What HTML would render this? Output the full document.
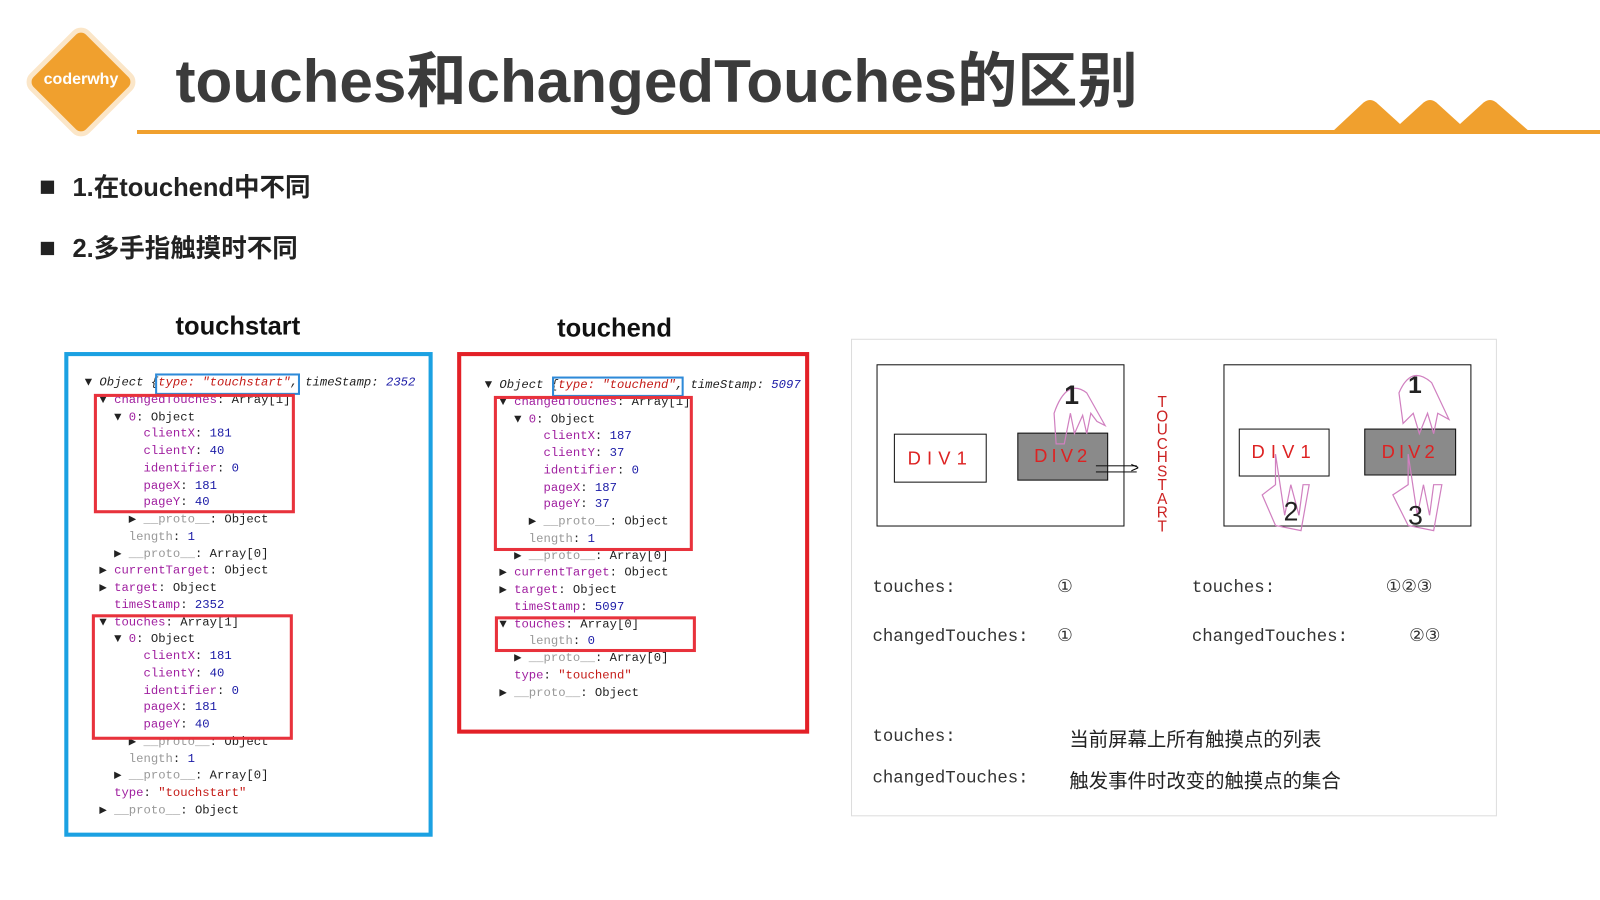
<!DOCTYPE html>
<html><head><meta charset="utf-8"><style>
body{margin:0;width:1600px;height:900px;background:#fff;position:relative;overflow:hidden;font-family:"Liberation Sans","Noto Sans CJK SC",sans-serif}
#w{position:absolute;left:0;top:0;width:1568px;height:882px;transform:scale(1.0204);transform-origin:0 0}
.a{position:absolute}
.t{font-size:59px;font-weight:bold;color:#3b3b3b;left:172px;top:32px;letter-spacing:0}
.b{font-size:25px;font-weight:bold;color:#222;left:40px}
.b i{display:inline-block;width:13px;height:13px;background:#222;margin-right:18px;vertical-align:2px}
.code{font-family:"Liberation Mono","DejaVu Sans Mono",monospace;font-size:12px;line-height:16.75px;white-space:pre;color:#222}
.k{color:#a020a0}.v{color:#1a1aa6}.g{color:#999}.s{color:#c41a16}.it{font-style:italic}
.rb{position:absolute;border:3px solid #e8323c}
.cn{font-family:"Liberation Mono","DejaVu Sans Mono",monospace;font-size:17px;color:#333}
.cz{font-size:19px;color:#222}
</style></head><body>
<div class="a" style="left:39px;top:40px;width:74px;height:74px;transform:rotate(45deg);background:#f0a02e;border:5px solid #fbe6c8;border-radius:12px"></div>
<div class="a" style="left:33px;top:71px;width:96px;text-align:center;color:#fff;font-weight:bold;font-size:16px">coderwhy</div>
<div class="a" style="left:137px;top:130px;width:1463px;height:4px;background:#f0a02e"></div>
<svg class="a" style="left:0;top:0" width="1600" height="140"><path d="M1332 132 L1362 104 Q1370 96 1378 104 L1400 124 L1422 104 Q1430 96 1438 104 L1460 124 L1482 104 Q1490 96 1498 104 L1530 132Z" fill="#f0a02e"/></svg>
<div id="w">
<div class="a t">touches和changedTouches的区别</div>
<div class="a b" style="top:164px"><i></i>1.在touchend中不同</div>
<div class="a b" style="top:224px"><i></i>2.多手指触摸时不同</div>
<div class="a" style="left:172px;top:306px;font-size:25px;font-weight:bold;color:#111">touchstart</div>
<div class="a" style="left:546px;top:308px;font-size:25px;font-weight:bold;color:#111">touchend</div>

<div class="a" style="left:63px;top:345px;width:353px;height:467px;border:4px solid #1ba1e2"></div>
<div class="a code" style="left:83px;top:367px">▼ <span class="it">Object {<span class="s">type: "touchstart"</span>, timeStamp: <span class="v">2352</span></span>
  ▼ <span class="k">changedTouches</span>: Array[1]
    ▼ <span class="k">0</span>: Object
        <span class="k">clientX</span>: <span class="v">181</span>
        <span class="k">clientY</span>: <span class="v">40</span>
        <span class="k">identifier</span>: <span class="v">0</span>
        <span class="k">pageX</span>: <span class="v">181</span>
        <span class="k">pageY</span>: <span class="v">40</span>
      ▶ <span class="g">__proto__</span>: Object
      <span class="g">length</span>: <span class="v">1</span>
    ▶ <span class="g">__proto__</span>: Array[0]
  ▶ <span class="k">currentTarget</span>: Object
  ▶ <span class="k">target</span>: Object
    <span class="k">timeStamp</span>: <span class="v">2352</span>
  ▼ <span class="k">touches</span>: Array[1]
    ▼ <span class="k">0</span>: Object
        <span class="k">clientX</span>: <span class="v">181</span>
        <span class="k">clientY</span>: <span class="v">40</span>
        <span class="k">identifier</span>: <span class="v">0</span>
        <span class="k">pageX</span>: <span class="v">181</span>
        <span class="k">pageY</span>: <span class="v">40</span>
      ▶ <span class="g">__proto__</span>: Object
      <span class="g">length</span>: <span class="v">1</span>
    ▶ <span class="g">__proto__</span>: Array[0]
    <span class="k">type</span>: <span class="s">"touchstart"</span>
  ▶ <span class="g">__proto__</span>: Object</div>
<div class="a" style="left:152px;top:366px;width:138px;height:17px;border:2px solid #2e8ad8"></div>
<div class="rb" style="left:92px;top:386px;width:191px;height:111px"></div>
<div class="rb" style="left:90px;top:602px;width:191px;height:117px"></div>

<div class="a" style="left:448px;top:345px;width:337px;height:366px;border:4px solid #e32027"></div>
<div class="a code" style="left:475px;top:369px">▼ <span class="it">Object {<span class="s">type: "touchend"</span>, timeStamp: <span class="v">5097</span></span>
  ▼ <span class="k">changedTouches</span>: Array[1]
    ▼ <span class="k">0</span>: Object
        <span class="k">clientX</span>: <span class="v">187</span>
        <span class="k">clientY</span>: <span class="v">37</span>
        <span class="k">identifier</span>: <span class="v">0</span>
        <span class="k">pageX</span>: <span class="v">187</span>
        <span class="k">pageY</span>: <span class="v">37</span>
      ▶ <span class="g">__proto__</span>: Object
      <span class="g">length</span>: <span class="v">1</span>
    ▶ <span class="g">__proto__</span>: Array[0]
  ▶ <span class="k">currentTarget</span>: Object
  ▶ <span class="k">target</span>: Object
    <span class="k">timeStamp</span>: <span class="v">5097</span>
  ▼ <span class="k">touches</span>: Array[0]
      <span class="g">length</span>: <span class="v">0</span>
    ▶ <span class="g">__proto__</span>: Array[0]
    <span class="k">type</span>: <span class="s">"touchend"</span>
  ▶ <span class="g">__proto__</span>: Object</div>
<div class="a" style="left:541px;top:369px;width:125px;height:16px;border:2px solid #2e8ad8"></div>
<div class="rb" style="left:484px;top:388px;width:189px;height:146px"></div>
<div class="rb" style="left:485px;top:604px;width:191px;height:29px"></div>

<div class="a" style="left:834px;top:332px;width:631px;height:466px;border:1px solid #ddd"></div>
<div class="a" style="left:859px;top:357px;width:241px;height:157px;border:1.5px solid #111"></div>
<div class="a" style="left:876px;top:425px;width:89px;height:46px;border:1.5px solid #111;color:#d22;font-size:18px;text-align:center;line-height:46px;letter-spacing:6px">DIV1</div>
<div class="a" style="left:997px;top:424px;width:87px;height:45px;border:1px solid #111;background:#8a8a8a;color:#d22;font-size:18px;text-align:center;line-height:45px;letter-spacing:4px">DIV2</div>
<div class="a" style="left:1074px;top:456px;width:40px;height:5px;border-top:1px solid #111;border-bottom:1px solid #111"></div>
<div class="a" style="left:1108px;top:450px;font-size:14px">&gt;</div>
<div class="a" style="left:1130px;top:388px;width:18px;color:#c22;font-size:15px;line-height:13.5px;text-align:center">T<br>O<br>U<br>C<br>H<br>S<br>T<br>A<br>R<br>T</div>
<div class="a" style="left:1199px;top:357px;width:241px;height:157px;border:1.5px solid #111"></div>
<div class="a" style="left:1214px;top:420px;width:87px;height:45px;border:1.5px solid #111;color:#d22;font-size:18px;text-align:center;line-height:45px;letter-spacing:6px">DIV1</div>
<div class="a" style="left:1337px;top:420px;width:88px;height:44px;border:1px solid #111;background:#8a8a8a;color:#d22;font-size:18px;text-align:center;line-height:44px;letter-spacing:4px">DIV2</div>
<svg class="a" style="left:1025px;top:365px" width="420" height="165" fill="none" stroke="#d080c0" stroke-width="1.2">
<path d="M10 70 L8 40 Q20 5 40 20 L58 52 L50 48 L44 40 L40 60 L36 42 L28 60 L24 40 L18 70Z"/>
<path d="M350 50 L346 20 Q358 -8 378 10 L395 46 L384 40 L380 60 L374 40 L366 60 L360 40Z"/>
<path d="M225 80 L225 110 L212 120 L225 150 L250 155 L258 110 L252 110 L248 140 L240 110 L234 140Z"/>
<path d="M355 80 L355 110 L340 120 L355 150 L380 155 L388 110 L380 110 L376 140 L370 110 L364 140Z"/>
</svg>
<div class="a" style="left:1043px;top:372px;font-size:26px;font-weight:bold;color:#222">1</div>
<div class="a" style="left:1380px;top:364px;font-size:24px;font-weight:bold;color:#222">1</div>
<div class="a" style="left:1258px;top:486px;font-size:26px;color:#222">2</div>
<div class="a" style="left:1380px;top:490px;font-size:26px;color:#222">3</div>
<div class="a cn" style="left:855px;top:567px">touches:</div><div class="a cn" style="left:1036px;top:565px">①</div>
<div class="a cn" style="left:1168px;top:567px">touches:</div><div class="a cn" style="left:1358px;top:565px">①②③</div>
<div class="a cn" style="left:855px;top:615px">changedTouches:</div><div class="a cn" style="left:1036px;top:613px">①</div>
<div class="a cn" style="left:1168px;top:615px">changedTouches:</div><div class="a cn" style="left:1381px;top:613px">②③</div>
<div class="a cn" style="left:855px;top:713px">touches:</div><div class="a cz" style="left:1048px;top:710px">当前屏幕上所有触摸点的列表</div>
<div class="a cn" style="left:855px;top:754px">changedTouches:</div><div class="a cz" style="left:1048px;top:751px">触发事件时改变的触摸点的集合</div>
</div>
</body></html>
